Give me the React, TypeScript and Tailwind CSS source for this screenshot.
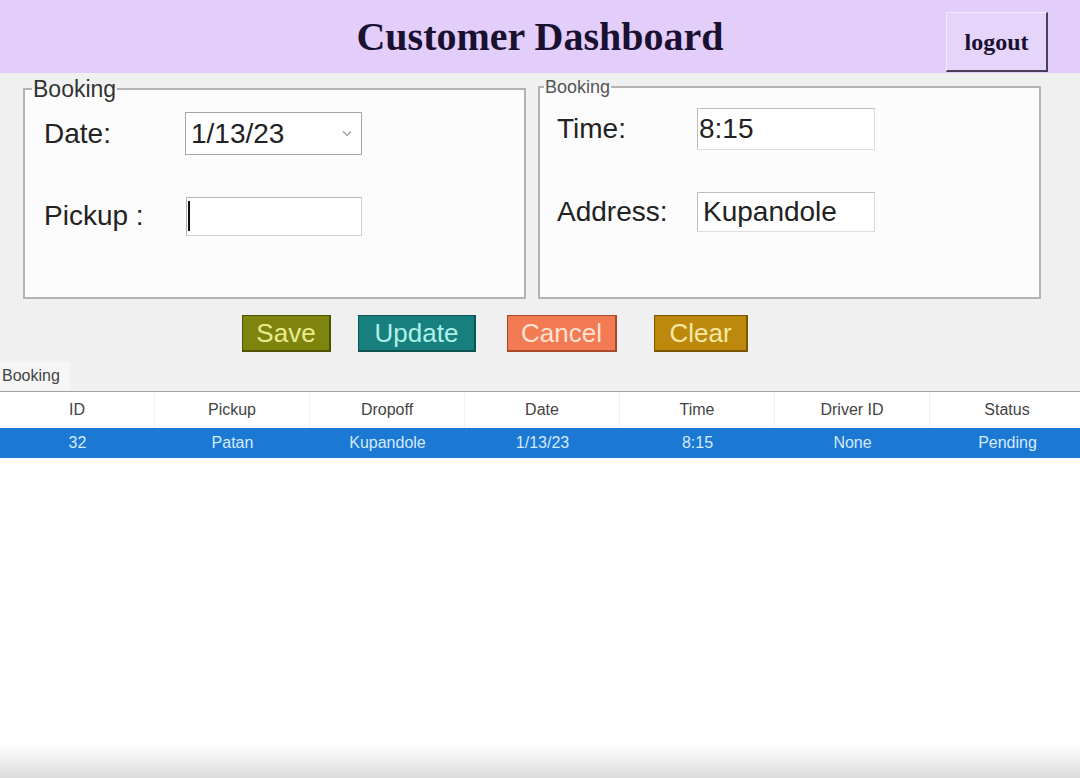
import React from 'react';

const sans = { fontFamily: '"Liberation Sans", Arial, sans-serif' };
const serif = { fontFamily: '"Liberation Serif", "Times New Roman", serif' };

const columns = ['ID', 'Pickup', 'Dropoff', 'Date', 'Time', 'Driver ID', 'Status'];
const rows = [['32', 'Patan', 'Kupandole', '1/13/23', '8:15', 'None', 'Pending']];

const buttons = [
  { label: 'Save', w: 'w-[89px]', cls: 'bg-[#7f840f] text-[#e8ec8c] border-[#4f5200]' },
  { label: 'Update', w: 'w-[118px]', cls: 'bg-[#17807f] text-[#aef0e8] border-[#0d5352]' },
  { label: 'Cancel', w: 'w-[110px]', cls: 'bg-[#f37b53] text-[#fde2d4] border-[#a84a2a]' },
  { label: 'Clear', w: 'w-[94px]', cls: 'bg-[#bd890c] text-[#f6e7a6] border-[#7a5600]' },
];

const App: React.FC = () => {
  return (
    <div className="w-[1080px] h-[778px] bg-[#f0f0f0] flex flex-col overflow-hidden" style={sans}>
      {/* header */}
      <header className="h-[73px] shrink-0 bg-[#e2cdfb] grid grid-cols-[1fr_auto_1fr]">
        <div />
        <h1 className="text-[40px] font-bold text-[#1a1030] leading-none self-center" style={serif}>
          Customer Dashboard
        </h1>
        <div className="flex justify-end items-start pr-[32px]">
          <button
            className="mt-[12px] w-[102px] h-[60px] bg-[#e6d5fb] border-t border-l border-t-[#f4ecfd] border-l-[#f4ecfd] border-r-2 border-b-2 border-r-[#4a3e58] border-b-[#4a3e58] text-[24px] font-bold text-[#1a1030]"
            style={serif}
          >
            logout
          </button>
        </div>
      </header>

      {/* booking frames */}
      <div className="flex items-start gap-[12px] pl-[23px]">
        <fieldset className="mt-[7px] w-[503px] h-[219px] border-2 border-[#b3b3b3] bg-[#fcfcfc]">
          <legend className="ml-[7px] px-[1px] text-[23px] leading-[18px] text-[#333]">Booking</legend>
          <div className="pl-[19px]">
            <div className="mt-[14px] flex items-center">
              <span className="w-[141px] text-[28px] text-[#222]">Date:</span>
              <div className="w-[177px] h-[43px] bg-white border border-[#a5a5a5] flex items-center justify-between pl-[5px] pr-[9px]">
                <span className="text-[28px] text-[#222]">1/13/23</span>
                <svg width="10" height="7" viewBox="0 0 10 7" fill="none">
                  <path d="M1 1.5 L5 5.5 L9 1.5" stroke="#9a9a9a" strokeWidth="1.2" />
                </svg>
              </div>
            </div>
            <div className="mt-[40px] flex items-center">
              <span className="w-[142px] text-[28px] text-[#222]">Pickup :</span>
              <div className="w-[176px] h-[39px] bg-white border border-[#d2d2d2] border-t-[#b5b5b5] border-l-[#b5b5b5] flex items-center pl-[1px]">
                <span className="w-[2px] h-[30px] bg-[#111]" />
              </div>
            </div>
          </div>
        </fieldset>

        <fieldset className="mt-[6px] w-[503px] h-[220px] border-2 border-[#b3b3b3] bg-[#fcfcfc]">
          <legend className="ml-[4px] px-[1px] text-[18px] leading-[16px] text-[#555]">Booking</legend>
          <div className="pl-[17px]">
            <div className="mt-[13px] flex items-center">
              <span className="w-[140px] text-[28px] text-[#222]">Time:</span>
              <div className="w-[178px] h-[42px] bg-white border border-[#dcdcdc] border-t-[#bdbdbd] border-l-[#bdbdbd] flex items-center pl-[1px]">
                <span className="text-[28px] text-[#222]">8:15</span>
              </div>
            </div>
            <div className="mt-[41px] flex items-center">
              <span className="w-[140px] text-[28px] text-[#222]">Address:</span>
              <div className="w-[178px] h-[40px] bg-white border border-[#dcdcdc] border-t-[#bdbdbd] border-l-[#bdbdbd] flex items-center pl-[5px]">
                <span className="text-[28px] text-[#222]">Kupandole</span>
              </div>
            </div>
          </div>
        </fieldset>
      </div>

      {/* actions */}
      <div className="mt-[16px] flex pl-[242px] gap-[27px]">
        {buttons.map((b, i) => (
          <button
            key={b.label}
            className={`${b.w} ${b.cls} ${i === 3 ? 'ml-[10px]' : i === 2 ? 'ml-[4px]' : ''} h-[37px] border border-b-2 border-r-2 text-[26px] leading-none text-center`}
          >
            {b.label}
          </button>
        ))}
      </div>

      {/* table */}
      <div className="mt-[8px] flex-1 flex flex-col">
        <div className="h-[31px] flex items-center">
          <span className="h-[28px] w-[70px] px-[2px] bg-[#f6f6f6] text-[16px] leading-[28px] text-[#444]">Booking</span>
        </div>
        <div className="flex-1 bg-white border-t border-[#a3a3a3] flex flex-col overflow-hidden">
          <div className="h-[36px] flex shrink-0">
            {columns.map((c) => (
              <div
                key={c}
                className="w-[155px] shrink-0 flex items-center justify-center text-[16px] text-[#444] border-r border-[#f0f0f0]"
              >
                {c}
              </div>
            ))}
          </div>
          {rows.map((r) => (
            <div key={r[0]} className="h-[30px] flex shrink-0 bg-[#1b79d4]">
              {r.map((cell, i) => (
                <div
                  key={i}
                  className="w-[155px] shrink-0 flex items-center justify-center text-[16px] text-[#d5e9ff]"
                >
                  {cell}
                </div>
              ))}
            </div>
          ))}
          <div className="flex-1" />
          <div className="h-[34px] shrink-0 bg-gradient-to-b from-white to-[#dcdcdc]" />
        </div>
      </div>
    </div>
  );
};

export default App;
